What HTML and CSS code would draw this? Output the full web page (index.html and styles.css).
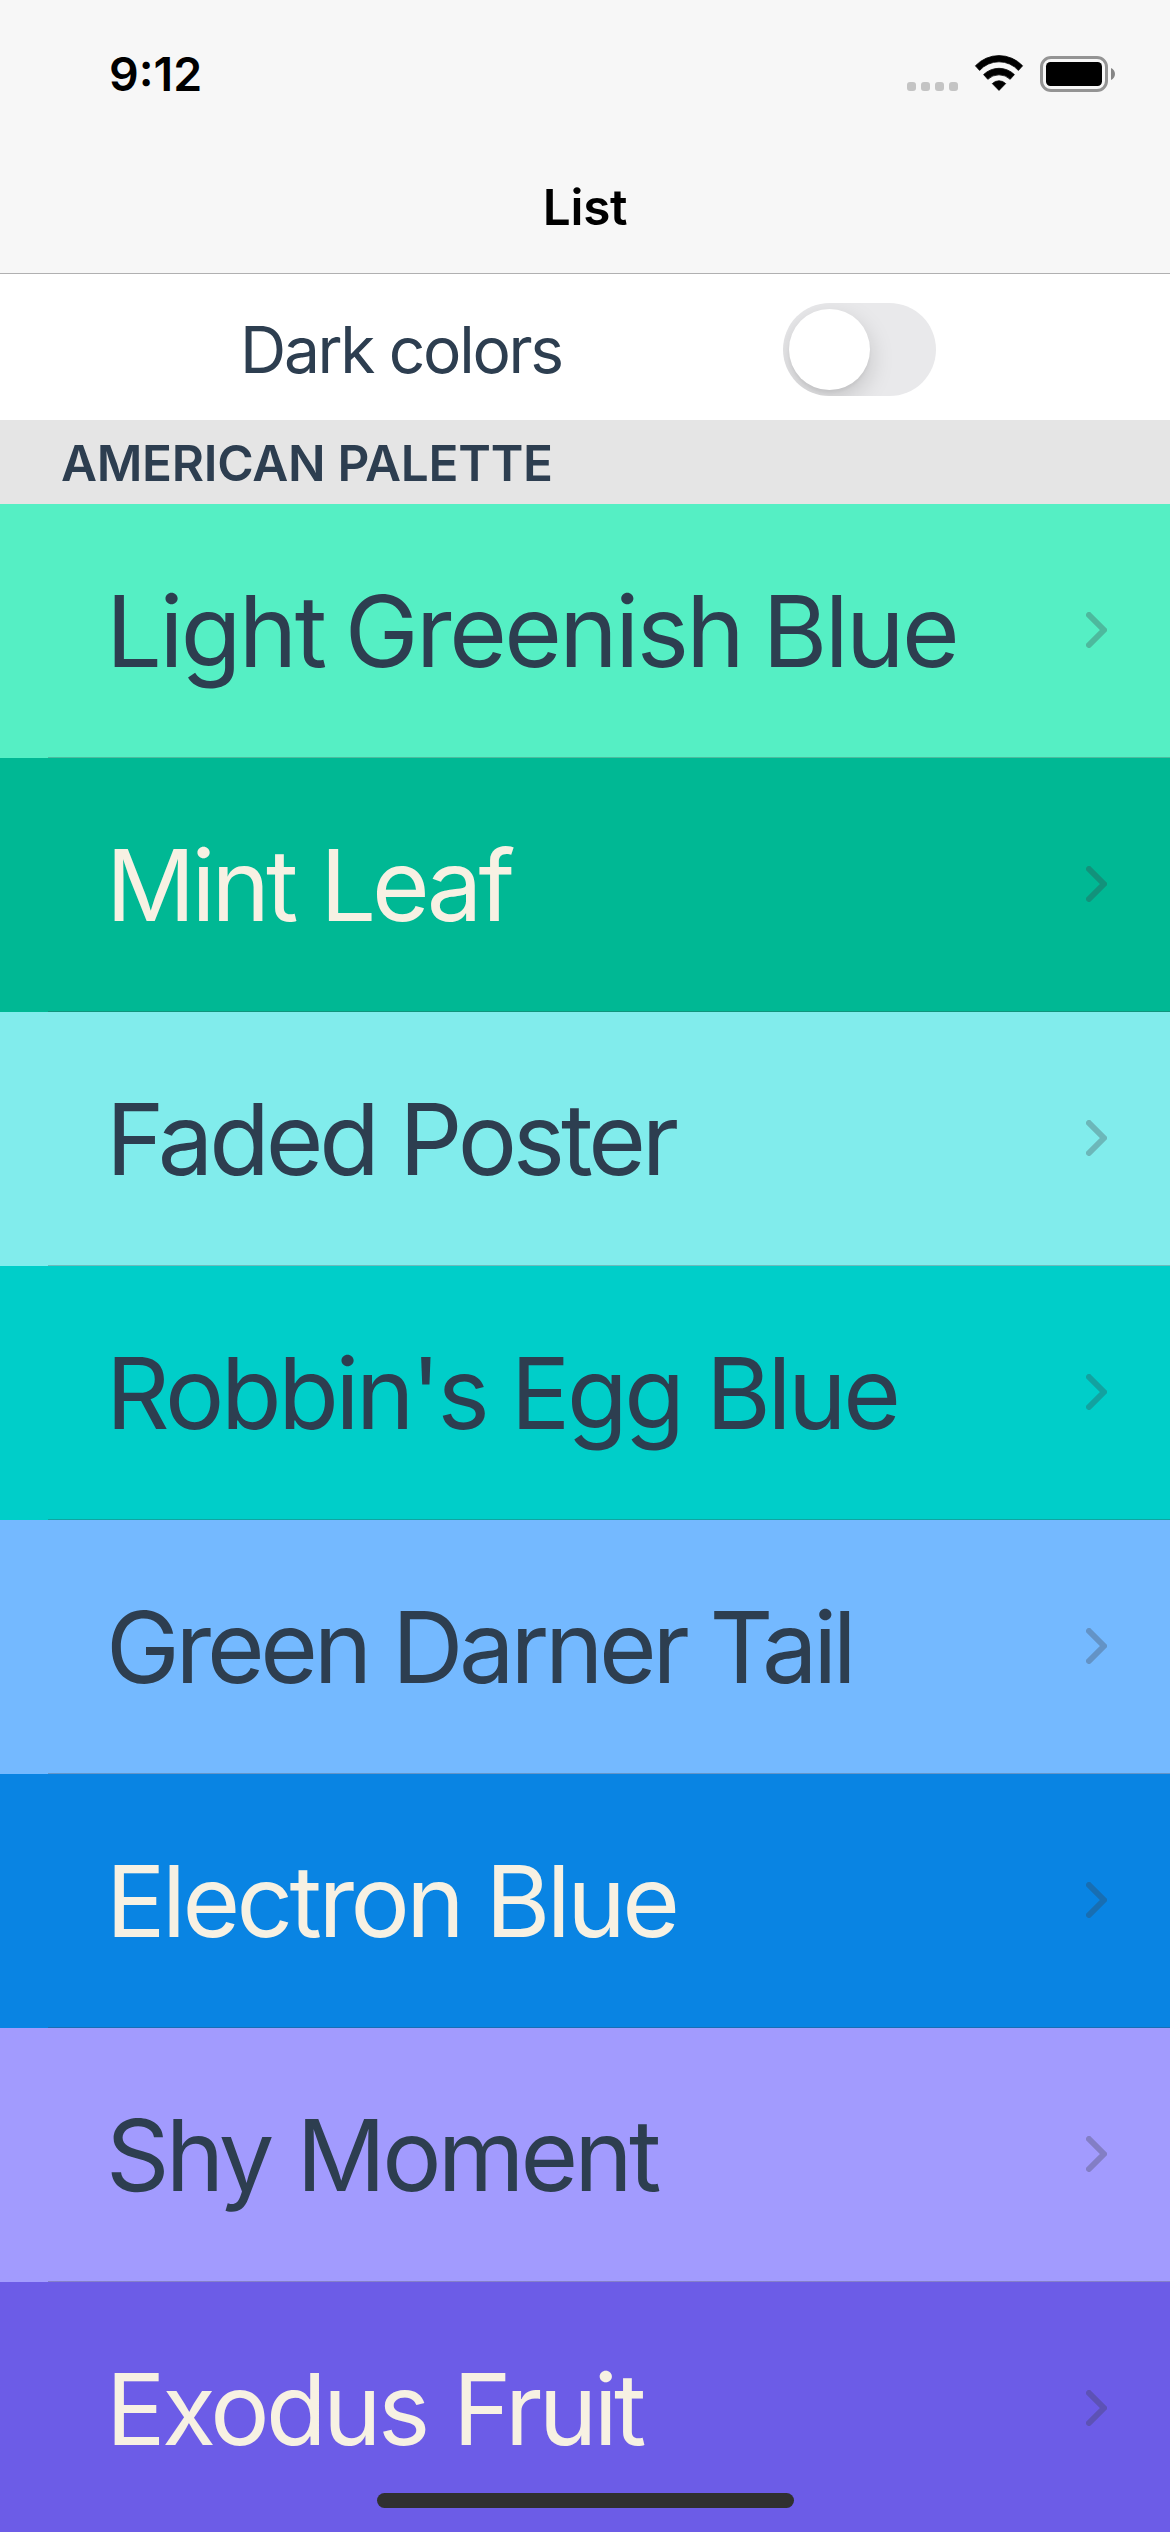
FILE: index.html
```html
<!DOCTYPE html>
<html lang="en">
<head>
<meta charset="utf-8">
<title>List</title>
<link rel="stylesheet" href="styles.css">
</head>
<body>
<svg class="defs" aria-hidden="true">
  <symbol id="chevron" viewBox="0 0 21 36"><path d="M3 3L18 18L3 33" fill="none" stroke="currentColor" stroke-width="6" stroke-linecap="round" stroke-linejoin="round"/></symbol>
</svg>
<div class="screen">
  <header class="header">
    <div class="status-bar">
      <span class="time">9:12</span>
      <svg class="indicators" viewBox="907 50 209 48" width="209" height="48">
        <g fill="#c4c4c4">
          <rect x="907" y="82" width="9" height="9" rx="3"/>
          <rect x="921" y="82" width="9" height="9" rx="3"/>
          <rect x="935" y="82" width="9" height="9" rx="3"/>
          <rect x="949" y="82" width="9" height="9" rx="3"/>
        </g>
        <g stroke="#000" stroke-width=".8" stroke-linejoin="round">
          <path d="M975.4 65.8A32.4 32.4 0 0 1 1022.6 65.8L1018.4 70.4A26.2 26.2 0 0 0 979.6 70.4Z"/>
          <path d="M983.6 74.6A22 22 0 0 1 1014.4 74.6L1010.2 79.3A16.2 16.2 0 0 0 987.8 79.3Z"/>
          <path d="M992.3 83.6A9.4 9.4 0 0 1 1005.7 83.6L999 90.4Z"/>
        </g>
        <rect x="1041.5" y="57.5" width="65" height="33" rx="9.5" fill="none" stroke="#949494" stroke-width="3"/>
        <rect x="1046" y="62" width="56" height="24" rx="4.5"/>
        <path d="M1111 68C1113.500 69 1115 71.500 1115 74S1113.500 79 1111 80Z" fill="#868686"/>
      </svg>
    </div>
    <h1 class="title">List</h1>
  </header>
  <div class="setting">
    <span class="setting-label">Dark colors</span>
    <span class="toggle" role="switch" aria-checked="false"><span class="knob"></span></span>
  </div>
  <h2 class="section">AMERICAN PALETTE</h2>
  <ul class="list">
    <li class="row greenish"><span class="name">Light Greenish Blue</span><svg class="chevron"><use href="#chevron"/></svg></li>
    <li class="row mint on-dark"><span class="name">Mint Leaf</span><svg class="chevron"><use href="#chevron"/></svg></li>
    <li class="row poster"><span class="name">Faded Poster</span><svg class="chevron"><use href="#chevron"/></svg></li>
    <li class="row robin"><span class="name">Robbin's Egg Blue</span><svg class="chevron"><use href="#chevron"/></svg></li>
    <li class="row darner"><span class="name">Green Darner Tail</span><svg class="chevron"><use href="#chevron"/></svg></li>
    <li class="row electron on-dark"><span class="name">Electron Blue</span><svg class="chevron"><use href="#chevron"/></svg></li>
    <li class="row shy"><span class="name">Shy Moment</span><svg class="chevron"><use href="#chevron"/></svg></li>
    <li class="row exodus on-dark"><span class="name">Exodus Fruit</span><svg class="chevron"><use href="#chevron"/></svg></li>
  </ul>
  <div class="home-indicator"></div>
</div>
</body>
</html>
```

FILE: styles.css
```css
* { box-sizing: border-box; margin: 0; padding: 0; }

body {
  font-family: Inter, "Liberation Sans", sans-serif;
  color: #2d3e50;
  background: #fff;
}

.defs { display: block; width: 0; height: 0; }

.screen {
  position: relative;
  width: 1170px;
  height: 2532px;
  overflow: hidden;
}

.header {
  height: 274px;
  background: #f7f7f7;
  border-bottom: 1px solid #b0b0b1;
  color: #000;
}

.status-bar {
  display: flex;
  justify-content: space-between;
  align-items: center;
  height: 141px;
  padding: 8px 54px 0 109px;
}

.time { font-size: 46.5px; font-weight: 600; margin-top: -1px; }

.indicators { margin-top: -1px; }

.title {
  height: 132px;
  line-height: 132px;
  text-align: center;
  font-size: 49.5px;
  font-weight: 600;
  letter-spacing: -.3px;
}

.setting {
  display: flex;
  align-items: center;
  justify-content: space-between;
  height: 146px;
  padding: 5px 234px 0 240px;
}

.setting-label { font-size: 64px; letter-spacing: -2.3px; }

.toggle {
  width: 153px;
  height: 93px;
  padding: 6px;
  border-radius: 47px;
  background: #e9e9eb;
  overflow: hidden;
}

.knob {
  display: block;
  width: 81px;
  height: 81px;
  border-radius: 50%;
  background: #fff;
  box-shadow: 0 9px 24px rgba(0, 0, 0, .17), 0 3px 3px rgba(0, 0, 0, .04);
}

.section {
  height: 84px;
  line-height: 87px;
  padding-left: 61px;
  background: #e5e5e5;
  font-size: 49.5px;
  font-weight: 600;
  letter-spacing: -.28px;
}

.list { list-style: none; }

.row {
  display: flex;
  align-items: center;
  justify-content: space-between;
  height: 254px;
  padding: 0 63px 0 106px;
  background-image: linear-gradient(rgba(60, 60, 67, .29), rgba(60, 60, 67, .29));
  background-repeat: no-repeat;
  background-position: 48px 253px;
  background-size: 1122px 1px;
}

.name { font-size: 99px; white-space: nowrap; }

.on-dark .name { color: #f7f1e3; }

.chevron { width: 21px; height: 36px; margin-top: -2px; color: rgba(60, 60, 67, .3); }

.greenish { background-color: #55efc4; letter-spacing: -2.6px; word-spacing: -5px; }
.mint { background-color: #00b894; letter-spacing: -4px; word-spacing: 2px; }
.poster { background-color: #81ecec; letter-spacing: -4.2px; }
.robin { background-color: #00cec9; letter-spacing: -3.37px; }
.darner { background-color: #74b9ff; letter-spacing: -4.3px; word-spacing: .5px; }
.electron { background-color: #0984e3; letter-spacing: -3.55px; }
.shy { background-color: #a29bfe; letter-spacing: -3.87px; word-spacing: 2px; }
.exodus { background-color: #6c5ce7; letter-spacing: -3.56px; word-spacing: 2px; }

.home-indicator {
  position: absolute;
  left: 377px;
  bottom: 24px;
  width: 417px;
  height: 15px;
  border-radius: 8px;
  background: #303030;
}
```
